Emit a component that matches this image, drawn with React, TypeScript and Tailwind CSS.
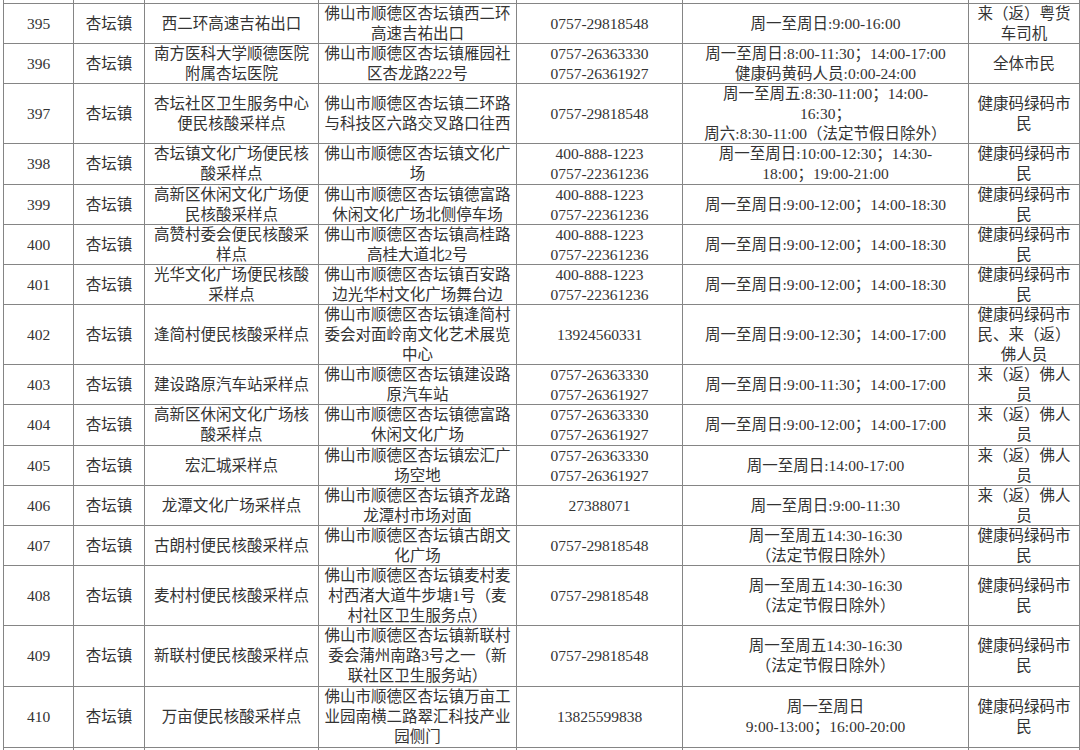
import React from 'react';

type Row = {
  no: string;
  h: string;
  name: string[];
  addr: string[];
  phone: string[];
  hours: string[];
  who: string[];
  town?: boolean;
};

const TOWN = '杏坛镇';
const GREEN = ['健康码绿码市', '民'];
const BACK = ['来（返）佛人', '员'];
const P400 = ['400-888-1223', '0757-22361236'];
const P263 = ['0757-26363330', '0757-26361927'];
const H918 = ['周一至周日:9:00-12:00；14:00-18:30'];
const WEEKDAY = ['周一至周五14:30-16:30', '（法定节假日除外）'];

// first and last rows are only slivers at the edges of the screenshot
const rows: Row[] = [
  { no: '', h: 'h-[40px]', name: [], addr: [], phone: [], hours: [], who: ['', '员'], town: false },
  { no: '395', h: 'h-[40px]', name: ['西二环高速吉祐出口'], addr: ['佛山市顺德区杏坛镇西二环', '高速吉祐出口'], phone: ['0757-29818548'], hours: ['周一至周日:9:00-16:00'], who: ['来（返）粤货', '车司机'] },
  { no: '396', h: 'h-[40px]', name: ['南方医科大学顺德医院', '附属杏坛医院'], addr: ['佛山市顺德区杏坛镇雁园社', '区杏龙路222号'], phone: P263, hours: ['周一至周日:8:00-11:30；14:00-17:00', '健康码黄码人员:0:00-24:00'], who: ['全体市民'] },
  { no: '397', h: 'h-[60px]', name: ['杏坛社区卫生服务中心', '便民核酸采样点'], addr: ['佛山市顺德区杏坛镇二环路', '与科技区六路交叉路口往西'], phone: ['0757-29818548'], hours: ['周一至周五:8:30-11:00；14:00-', '16:30；', '周六:8:30-11:00（法定节假日除外）'], who: GREEN },
  { no: '398', h: 'h-[41px]', name: ['杏坛镇文化广场便民核', '酸采样点'], addr: ['佛山市顺德区杏坛镇文化广', '场'], phone: P400, hours: ['周一至周日:10:00-12:30；14:30-', '18:00；19:00-21:00'], who: GREEN },
  { no: '399', h: 'h-[40px]', name: ['高新区休闲文化广场便', '民核酸采样点'], addr: ['佛山市顺德区杏坛镇德富路', '休闲文化广场北侧停车场'], phone: P400, hours: H918, who: GREEN },
  { no: '400', h: 'h-[40px]', name: ['高赞村委会便民核酸采', '样点'], addr: ['佛山市顺德区杏坛镇高桂路', '高桂大道北2号'], phone: P400, hours: H918, who: GREEN },
  { no: '401', h: 'h-[40px]', name: ['光华文化广场便民核酸', '采样点'], addr: ['佛山市顺德区杏坛镇百安路', '边光华村文化广场舞台边'], phone: P400, hours: H918, who: GREEN },
  { no: '402', h: 'h-[60px]', name: ['逢简村便民核酸采样点'], addr: ['佛山市顺德区杏坛镇逢简村', '委会对面岭南文化艺术展览', '中心'], phone: ['13924560331'], hours: ['周一至周日:9:00-12:30；14:00-17:00'], who: ['健康码绿码市', '民、来（返）', '佛人员'] },
  { no: '403', h: 'h-[40px]', name: ['建设路原汽车站采样点'], addr: ['佛山市顺德区杏坛镇建设路', '原汽车站'], phone: P263, hours: ['周一至周日:9:00-11:30；14:00-17:00'], who: BACK },
  { no: '404', h: 'h-[41px]', name: ['高新区休闲文化广场核', '酸采样点'], addr: ['佛山市顺德区杏坛镇德富路', '休闲文化广场'], phone: P263, hours: ['周一至周日:9:00-12:00；14:00-17:00'], who: BACK },
  { no: '405', h: 'h-[40px]', name: ['宏汇城采样点'], addr: ['佛山市顺德区杏坛镇宏汇广', '场空地'], phone: P263, hours: ['周一至周日:14:00-17:00'], who: BACK },
  { no: '406', h: 'h-[40px]', name: ['龙潭文化广场采样点'], addr: ['佛山市顺德区杏坛镇齐龙路', '龙潭村市场对面'], phone: ['27388071'], hours: ['周一至周日:9:00-11:30'], who: BACK },
  { no: '407', h: 'h-[40px]', name: ['古朗村便民核酸采样点'], addr: ['佛山市顺德区杏坛镇古朗文', '化广场'], phone: ['0757-29818548'], hours: WEEKDAY, who: GREEN },
  { no: '408', h: 'h-[60px]', name: ['麦村村便民核酸采样点'], addr: ['佛山市顺德区杏坛镇麦村麦', '村西渚大道牛步塘1号（麦', '村社区卫生服务点）'], phone: ['0757-29818548'], hours: WEEKDAY, who: GREEN },
  { no: '409', h: 'h-[61px]', name: ['新联村便民核酸采样点'], addr: ['佛山市顺德区杏坛镇新联村', '委会蒲州南路3号之一（新', '联社区卫生服务站）'], phone: ['0757-29818548'], hours: WEEKDAY, who: GREEN },
  { no: '410', h: 'h-[61px]', name: ['万亩便民核酸采样点'], addr: ['佛山市顺德区杏坛镇万亩工', '业园南横二路翠汇科技产业', '园侧门'], phone: ['13825599838'], hours: ['周一至周日', '9:00-13:00；16:00-20:00'], who: GREEN },
  { no: '', h: 'h-[40px]', name: [], addr: [], phone: [], hours: [], who: [], town: false },
];

function Cell({ lines, h }: { lines: string[]; h: string }) {
  return (
    <div className={`${h} flex flex-col items-center justify-center border-r border-b border-[#858585] text-center whitespace-nowrap`}>
      {lines.map((l, i) => (
        <div key={i} className="h-[20px] leading-[20px]">{l}</div>
      ))}
    </div>
  );
}

export default function App() {
  return (
    <div className="h-[750px] w-[1080px] overflow-hidden bg-white">
      <div className="mt-[-36px] ml-[3px] grid grid-cols-[70px_71px_174px_198px_166px_286px_111px] border-l border-[#858585] text-[15.5px] text-[#333] [font-family:'Liberation_Serif','Noto_Sans_CJK_SC',serif]">
        {rows.map((r, idx) => (
          <React.Fragment key={idx}>
            <Cell lines={r.no ? [r.no] : []} h={r.h} />
            <Cell lines={r.town === false ? [] : [TOWN]} h={r.h} />
            <Cell lines={r.name} h={r.h} />
            <Cell lines={r.addr} h={r.h} />
            <Cell lines={r.phone} h={r.h} />
            <Cell lines={r.hours} h={r.h} />
            <Cell lines={r.who} h={r.h} />
          </React.Fragment>
        ))}
      </div>
    </div>
  );
}
